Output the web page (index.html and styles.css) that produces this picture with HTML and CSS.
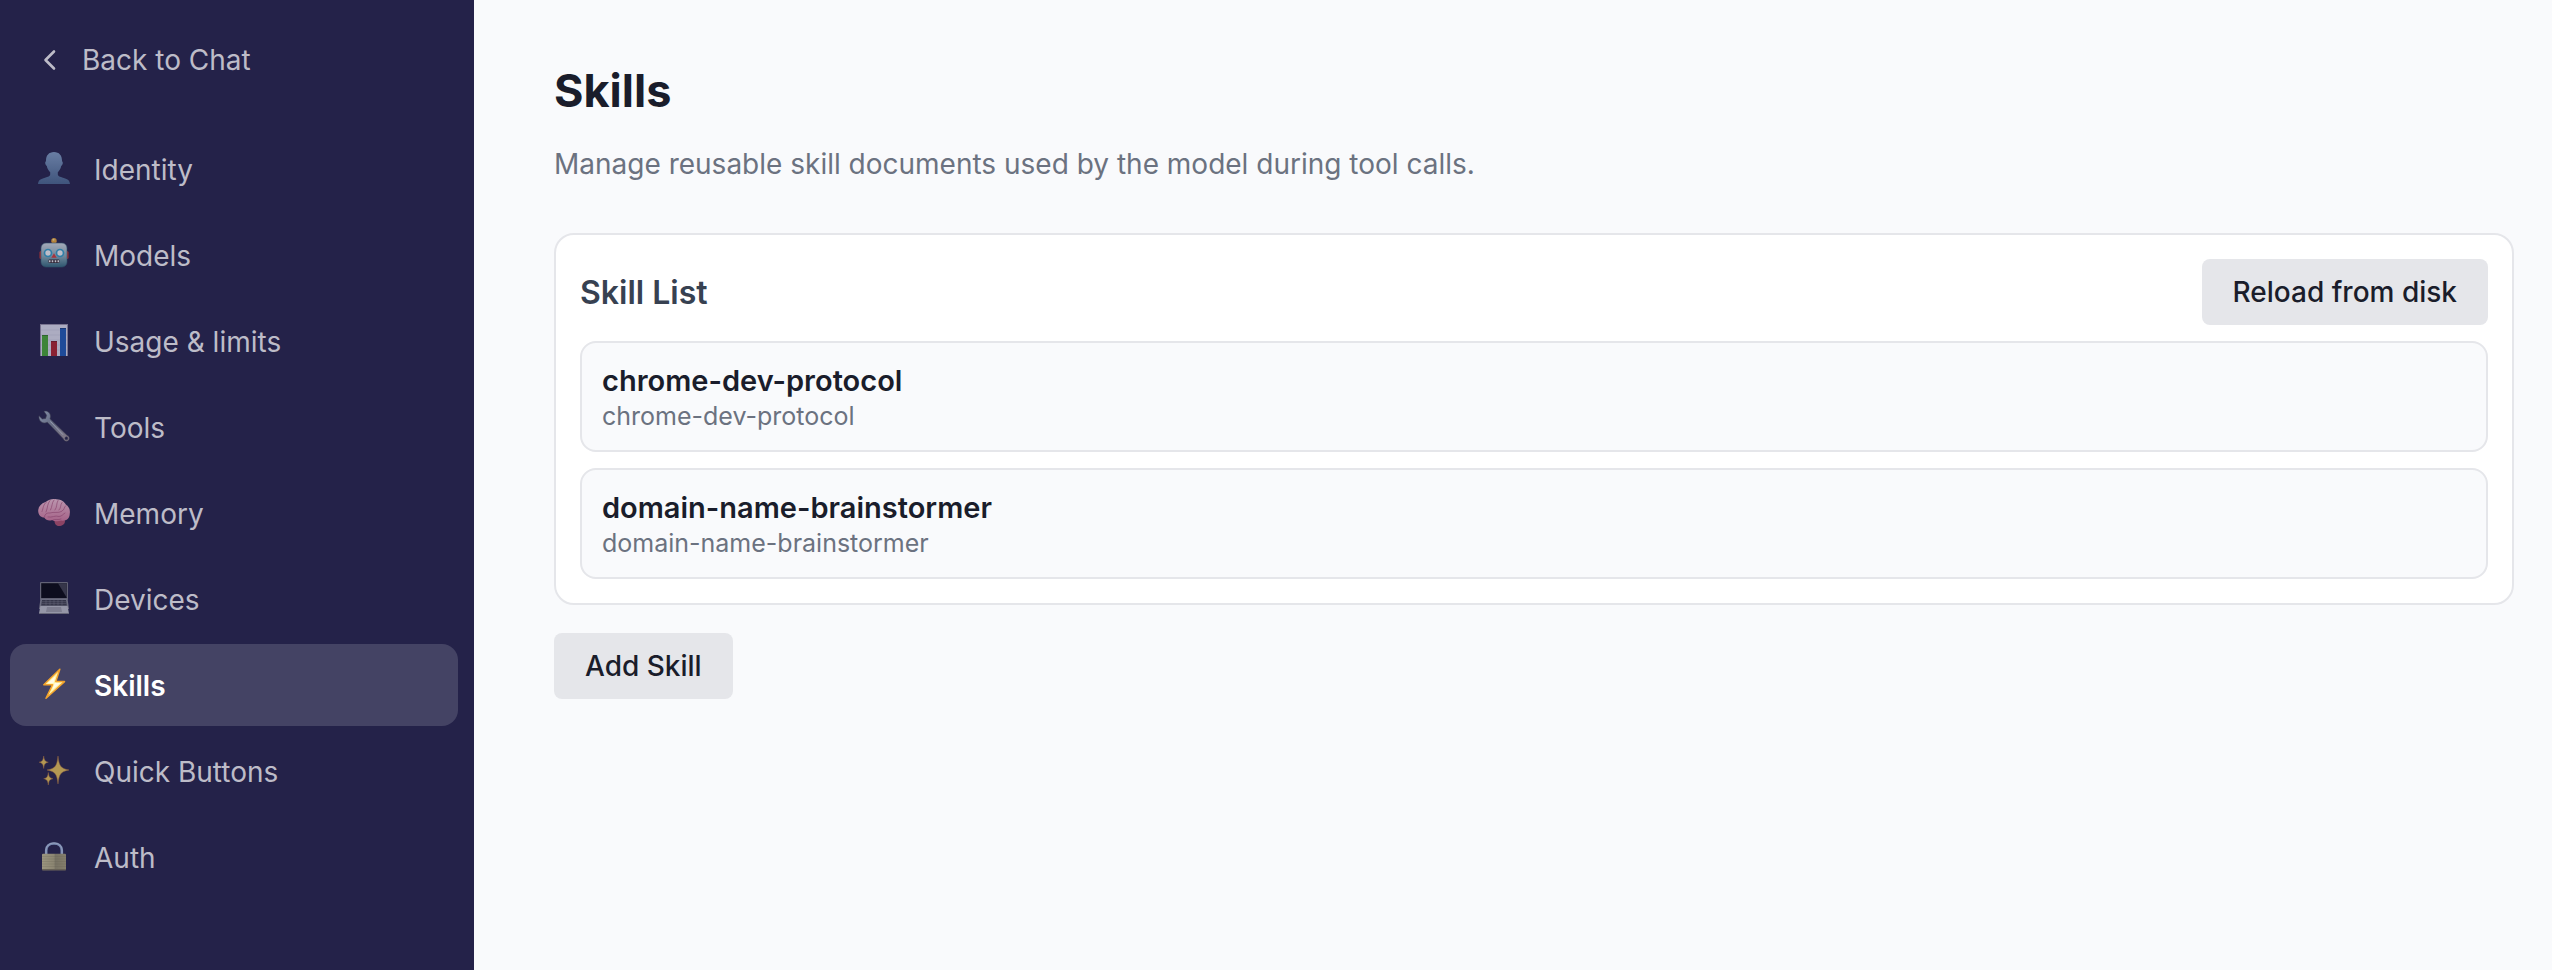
FILE: index.html
```html
<!DOCTYPE html>
<html lang="en">
<head>
  <meta charset="UTF-8">
  <meta name="viewport" content="width=device-width, initial-scale=1.0">
  <title>Skills</title>
  <link rel="stylesheet" href="styles.css">
</head>
<body>
  <div class="layout">
    <aside class="sidebar">
      <a href="#" class="back-link">
        <svg class="back-icon" viewBox="0 0 24 24" fill="none" stroke="currentColor" stroke-width="2.6" stroke-linecap="round" stroke-linejoin="round"><path d="M16 3.500 7.500 12 16 20.500"/></svg>
        Back to Chat
      </a>

      <nav class="nav">
        <a href="#" class="nav-item">
          <svg class="nav-icon" viewBox="0 0 32 32">
            <defs><linearGradient id="person" x1="0" y1="0" x2="0" y2="1"><stop offset="0" stop-color="#87a5ca"/><stop offset="1" stop-color="#4b6a92"/></linearGradient></defs>
            <path fill="url(#person)" d="M16 0c5.200 0 8 3.500 8 8.500 0 1 .9 1.200.8 2.600-.1 1.500-.8 2.500-1.600 2.900-.5 2.700-1.800 4.800-3.400 6.300v2.200c0 1.700 2.200 2.300 5.200 3.200 4.200 1.200 6.600 2.300 7 6.300H0c.4-4 2.800-5.100 7-6.300 3-.9 5.200-1.500 5.200-3.200v-2.200C10.600 18.800 9.300 16.700 8.800 14c-.8-.4-1.500-1.400-1.600-2.900C7.100 9.700 8 9.500 8 8.500 8 3.500 10.800 0 16 0z"/>
          </svg>
          Identity
        </a>
        <a href="#" class="nav-item">
          <svg class="nav-icon" viewBox="0 0 32 32">
            <defs><linearGradient id="robot" x1="0" y1="0" x2="0" y2="1"><stop offset="0" stop-color="#dbe4e8"/><stop offset=".55" stop-color="#8fb2bd"/><stop offset="1" stop-color="#336d80"/></linearGradient></defs>
            <rect x="1.500" y="13" width="4" height="8" rx="1.500" fill="#d9372c"/>
            <rect x="26.500" y="13" width="4" height="8" rx="1.500" fill="#d9372c"/>
            <rect x="13.500" y="3" width="5" height="3.500" fill="#934457"/>
            <circle cx="16" cy="2.700" r="2.700" fill="#f5ae34"/>
            <circle cx="15.500" cy="1.800" r="1" fill="#ffe9a0"/>
            <rect x="3" y="5" width="26" height="24" rx="5" fill="url(#robot)" stroke="#376579" stroke-width=".6"/>
            <circle cx="10" cy="15" r="3.500" fill="#fff" stroke="#35a5cf" stroke-width="1.700"/>
            <circle cx="22" cy="15" r="3.500" fill="#fff" stroke="#35a5cf" stroke-width="1.700"/>
            <path d="M16 15.300 18.700 19.800h-5.400z" fill="#dc3c38"/>
            <rect x="10.500" y="21.500" width="11" height="3.500" rx="1" fill="#32242b"/>
            <path d="M11.700 22.200v2M14.500 22.200v2M17.500 22.200v2M20.300 22.200v2" stroke="#fff" stroke-width="1.600"/>
          </svg>
          Models
        </a>
        <a href="#" class="nav-item">
          <svg class="nav-icon" viewBox="0 0 32 32">
            <rect x="2" width="28" height="32" fill="#9d97af"/>
            <path d="M3 1h26v31H3z" fill="#e6e7f4"/>
            <path d="M3 6h26M3 11h26M3 16h26M3 21h26M3 26h26" stroke="#d1d2e0" stroke-width=".6"/>
            <path fill="#48ae32" d="M4 11h6v21H4z"/><path fill="#338323" d="M4 11h6v1H4z"/>
            <path fill="#b4212a" d="M13 17h6v15h-6z"/><path fill="#831924" d="M13 17h6v1h-6z"/>
            <path fill="#1e5dbb" d="M22 4h6v28h-6z"/><path fill="#174288" d="M22 4h6v1h-6z"/>
          </svg>
          Usage &amp; limits
        </a>
        <a href="#" class="nav-item">
          <svg class="nav-icon" viewBox="0 0 32 32">
            <defs><linearGradient id="wrench" x1="0" y1="0" x2="1" y2="1"><stop offset="0" stop-color="#b1c2d6"/><stop offset=".45" stop-color="#7e8797"/><stop offset="1" stop-color="#b4a4a7"/></linearGradient></defs>
            <path fill="url(#wrench)" stroke="#474655" stroke-width=".6" fill-rule="evenodd" d="M6 1.300C9.500.4 12.500 3 12.500 6.300c0 1-.2 1.700-.5 2.500l17.300 16.800c1.200.3 2 1.300 2 2.700 0 1.600-1.200 2.900-2.900 2.900-1.500 0-2.500-.9-2.900-2.200L9.300 12.200c-1 .6-2 .9-3.200.8C2.800 12.700.4 9.600 1 5.800l3.300 3.100 3.300-.4 1-3.200zM28.400 26.800a1.500 1.500 0 1 0 0 3 1.500 1.500 0 0 0 0-3z"/>
            <path d="M12.300 11.400 25 24.700" stroke="#d1d8e2" stroke-width=".9"/>
          </svg>
          Tools
        </a>
        <a href="#" class="nav-item">
          <svg class="nav-icon" viewBox="0 0 32 32">
            <defs><linearGradient id="brain" x1="0" y1="0" x2="0" y2="1"><stop offset="0" stop-color="#fbc8da"/><stop offset="1" stop-color="#dd7ea3"/></linearGradient></defs>
            <path fill="#b95270" d="M16.500 25c0-3 10.500-4.500 10.500 0 0 3.500-3 5-6 5-2.500 0-4.500-2-4.500-5z"/>
            <path fill="url(#brain)" d="M7.500 6C11 3 15 2.500 18.500 3.200c5 .2 8 2.800 9.300 5.300C31 10.500 32.500 14 31.700 18c.2 4.500-4 7.600-8.500 6.600-4.500 1.500-7.500.3-9-.6-3 1.400-6.500.2-8-2.500-3.500 0-6.200-3.300-6-7C.4 10.500 3 7.500 7.500 6z"/>
            <g fill="none" stroke="#b5587f" stroke-width=".7" stroke-linecap="round">
              <path d="M8.500 6C5 8.500 5.500 12 4 15.500M12 4.500C9 8 10 11.500 8 16M16 4c-2.500 3-1.500 6.500-3.500 10M20 4.500c-2 3.500-.5 6-3 9.500M24 6.500c-2 2.500-.5 5-3 7.500M28 9.500c-2.500 1.500-1 4.500-4 5.500"/>
              <path d="M6.500 21c0-3 2.500-4.500 5.500-4 4-1.500 8 .5 11.500-1.500M10 21c4 1 7-2 11-.5 3 0 4-2.500 6-3.500M15 24c2.500-1.500 5 .5 8-1"/>
            </g>
          </svg>
          Memory
        </a>
        <a href="#" class="nav-item">
          <svg class="nav-icon" viewBox="0 0 32 32">
            <rect x="2" width="28" height="18" rx="1" fill="#7d7e88"/>
            <path fill="#04050c" d="M3.200 1.200h25.600v15H3.200z"/>
            <path fill="#3e3f4b" d="M20 1.200h8.800v14.500z"/>
            <path fill="#8b8d98" d="M2.500 16.500h27L31 27H1z"/>
            <path fill="#3c3e49" d="M4 18h24l.8 5.500H3.200z"/>
            <path d="M4 19.700h24M3.700 21.600h24.600M8 18v5.500M12 18v5.500M16 18v5.500M20 18v5.500M24 18v5.500" stroke="#80828e" stroke-width=".5"/>
            <path fill="#c6c7cf" d="M2.400 24h27.200L31 31.500H1z"/>
            <path fill="#a4a5af" d="M9 25h14l1 5H8z"/>
            <path fill="#85868f" d="M1 31h30v1H1z"/>
          </svg>
          Devices
        </a>
        <a href="#" class="nav-item active" aria-current="page">
          <svg class="nav-icon" viewBox="0 0 32 32">
            <path fill="#fff3a5" stroke="#f3a32c" stroke-width="1.500" stroke-linejoin="round" d="M21.800 1.200 5.800 16.800h8.700L8 30.300 26.500 13.600h-8.700z"/>
            <path fill="#fffbe8" d="M17.500 8 9.500 15.300h7.300L14 22l8.500-7h-7z"/>
          </svg>
          Skills
        </a>
        <a href="#" class="nav-item">
          <svg class="nav-icon" viewBox="0 0 32 32" fill="#f0cb58" stroke="#b9783e" stroke-width=".5">
            <path d="M20 2c1 9.500 2.500 12.500 11 14-8.500 1.500-10 4.500-11 14-1-9.500-2.500-12.500-11-14 8.500-1.500 10-4.500 11-14z"/>
            <path d="M5.700 2c.6 4.200 1.200 5.500 4.600 6.200-3.400.7-4 2-4.600 6.300-.6-4.300-1.200-5.600-4.600-6.300C4.500 7.500 5.100 6.200 5.700 2z"/>
            <path d="M10.300 18.500c.6 4.200 1.200 5.500 4.600 6.200-3.400.7-4 2-4.600 6.300-.6-4.300-1.200-5.600-4.600-6.300 3.400-.7 4-2 4.600-6.200z"/>
          </svg>
          Quick Buttons
        </a>
        <a href="#" class="nav-item">
          <svg class="nav-icon" viewBox="0 0 32 32">
            <defs><linearGradient id="lock"><stop offset="0" stop-color="#cfc797"/><stop offset=".5" stop-color="#b8b084"/><stop offset=".55" stop-color="#9b9570"/><stop offset="1" stop-color="#aea67b"/></linearGradient></defs>
            <path fill="none" stroke="#9bb4dc" stroke-width="2.600" d="M8.200 15v-4.500C8.200 6 11.500 3.500 16 3.500s7.800 2.500 7.800 7V15"/>
            <path fill="none" stroke="#d2dff2" stroke-width=".8" d="M8 14v-4C8 6 11.500 3 16 3s8 3 8 7v4"/>
            <rect x="4" y="13.700" width="24" height="16.600" rx="1" fill="url(#lock)"/>
            <path stroke="#77714f" stroke-width=".5" opacity=".4" d="M4 16.500h24M4 19h24M4 21.500h24M4 24h24M4 26.500h24"/>
            <path fill="#827b5b" d="M4 29h24v1.300H4z"/>
          </svg>
          Auth
        </a>
      </nav>
    </aside>

    <main class="content">
      <h1>Skills</h1>
      <p class="subtitle">Manage reusable skill documents used by the model during tool calls.</p>

      <section class="card">
        <div class="card-header">
          <h2>Skill List</h2>
          <button type="button" class="btn">Reload from disk</button>
        </div>
        <ul class="skill-list">
          <li class="skill">
            <div class="skill-name">chrome-dev-protocol</div>
            <div class="skill-id">chrome-dev-protocol</div>
          </li>
          <li class="skill">
            <div class="skill-name">domain-name-brainstormer</div>
            <div class="skill-id">domain-name-brainstormer</div>
          </li>
        </ul>
      </section>

      <button type="button" class="btn">Add Skill</button>
    </main>
  </div>
</body>
</html>
```

FILE: styles.css
```css
* {
  box-sizing: border-box;
}

body {
  margin: 0;
  font-family: Inter, "Liberation Sans", sans-serif;
  font-size: 28px;
  line-height: 40px;
  color: #1a1d2b;
  background-color: #f9fafc;
}

.layout {
  display: flex;
  min-height: 100vh;
}

/* Sidebar */
.sidebar {
  flex: 0 0 474px;
  padding: 20px 16px 20px 10px;
  background-color: #242249;
}

.back-link {
  display: flex;
  align-items: center;
  gap: 20px;
  height: 80px;
  margin-bottom: 28px;
  padding: 0 28px;
  color: #bdbcc8;
  text-decoration: none;
}

.back-icon {
  width: 24px;
  height: 24px;
}

.nav {
  display: flex;
  flex-direction: column;
  gap: 4px;
}

.nav-item {
  display: flex;
  align-items: center;
  gap: 24px;
  height: 82px;
  padding: 2px 28px 0;
  border-radius: 16px;
  color: #bdbcc8;
  text-decoration: none;
}

.nav-icon {
  width: 32px;
  height: 32px;
  margin-bottom: 4px;
  opacity: 0.7;
}

.nav-item.active {
  background-color: #444364;
  color: #ffffff;
  font-weight: 600;
}

.nav-item.active .nav-icon {
  opacity: 1;
}

/* Main content */
.content {
  flex: 1;
  padding: 61px 38px 60px 80px;
}

h1 {
  margin: 0 0 23px;
  font-size: 45px;
  line-height: 60px;
  font-weight: 700;
}

.subtitle {
  margin: 0 0 49px;
  color: #6b7280;
}

.card {
  margin-bottom: 28px;
  padding: 24px;
  background-color: #ffffff;
  border: 2px solid #e5e6ea;
  border-radius: 20px;
}

.card-header {
  display: flex;
  justify-content: space-between;
  align-items: center;
  margin-bottom: 16px;
}

h2 {
  margin: 0;
  padding-top: 2px;
  font-size: 32px;
  font-weight: 600;
  color: #374151;
}

.btn {
  height: 66px;
  padding: 0 31px;
  border: none;
  border-radius: 8px;
  background-color: #e5e6ea;
  color: #1a1d2b;
  font-family: inherit;
  font-size: 28px;
  font-weight: 500;
  cursor: pointer;
}

.skill-list {
  display: flex;
  flex-direction: column;
  gap: 16px;
  margin: 0;
  padding: 0;
  list-style: none;
}

.skill {
  padding: 19px 20px 17px;
  background-color: #f9fafc;
  border: 2px solid #e5e6ea;
  border-radius: 16px;
}

.skill-name {
  font-size: 29px;
  line-height: 38px;
  font-weight: 600;
}

.skill-id {
  font-size: 25px;
  line-height: 33px;
  color: #6b7280;
}
```
